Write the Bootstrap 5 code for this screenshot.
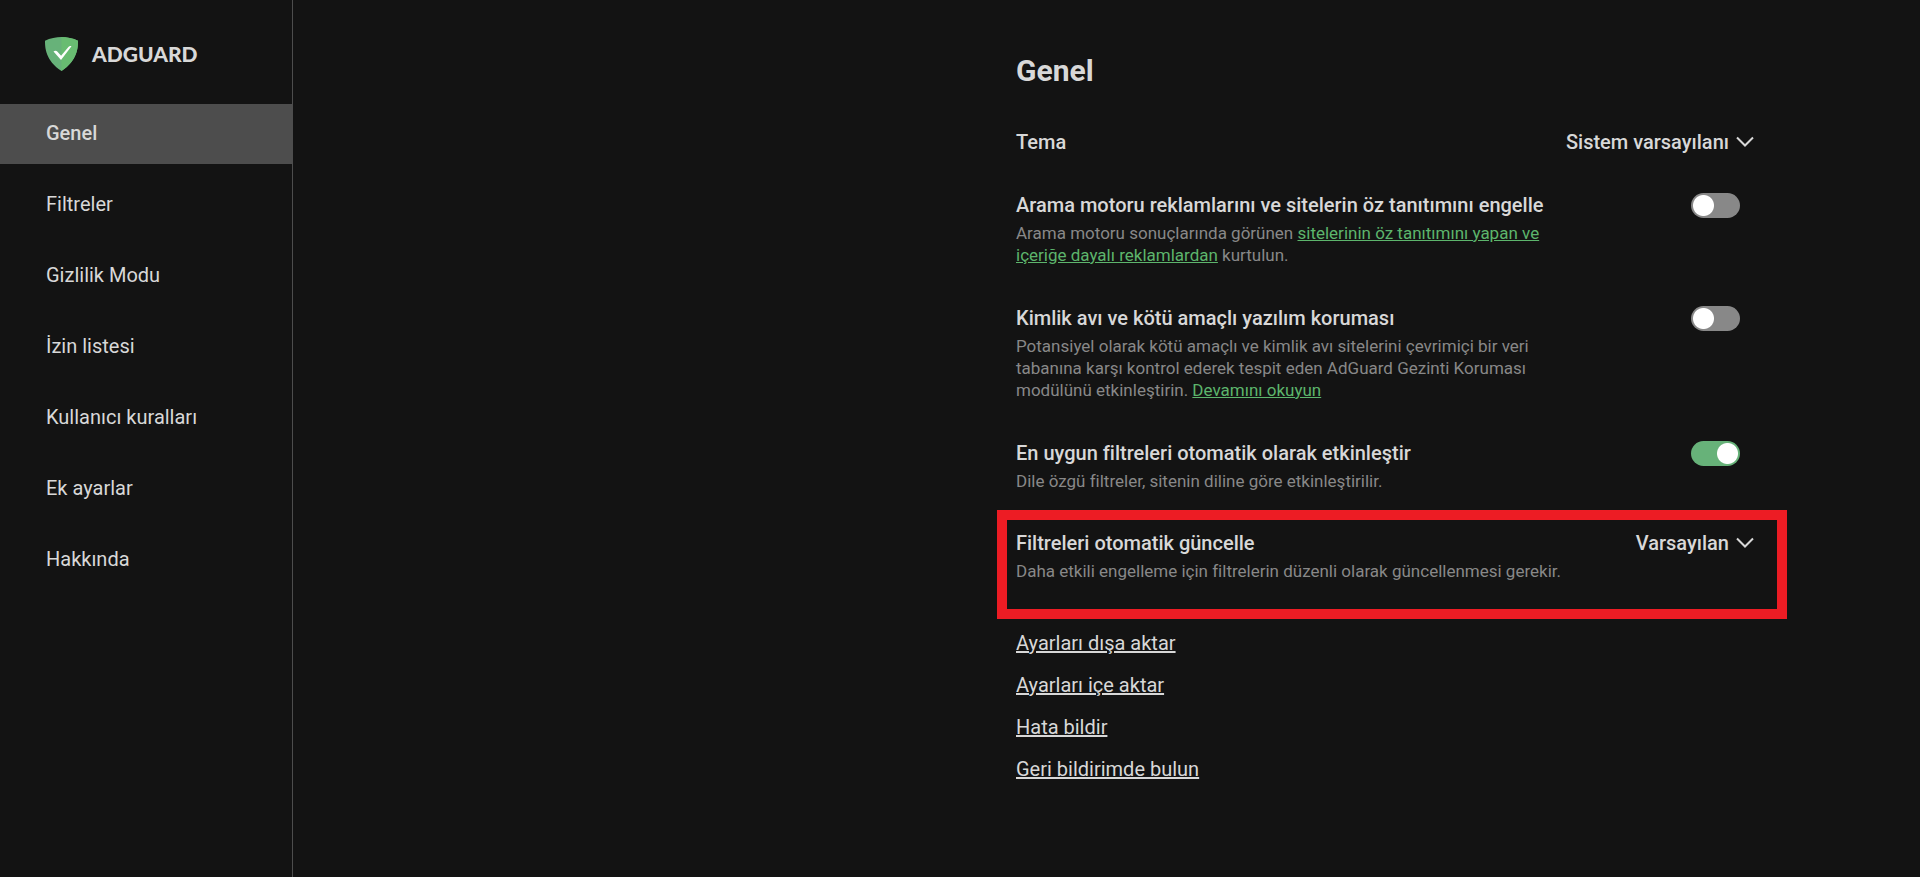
<!DOCTYPE html>
<html lang="tr">
<head>
<meta charset="utf-8">
<meta name="viewport" content="width=device-width, initial-scale=1">
<title>AdGuard – Genel</title>
<link href="https://cdn.jsdelivr.net/npm/bootstrap@5.3.0/dist/css/bootstrap.min.css" rel="stylesheet">
<style>
  body { background: #131313; color: #d8d8d8; font: 400 20px/24px Roboto, "Open Sans", sans-serif; }
  .sidebar { width: 293px; border-right: 1px solid #4d4d4d; }
  .brand { height: 104px; padding: 3px 0 0 45px; gap: 14px; color: #d8d8d8; font: 900 21px/24px Lato, sans-serif; }
  .side-menu { gap: 11px; }
  .side-menu .nav-link { padding: 17px 46px 19px; color: #d8d8d8; }
  .side-menu .nav-link.active { background: #4d4d4d; font-weight: 500; }
  .settings { max-width: 790px; margin: 55px 133px 0 0; }
  .settings h1 { margin: 0; padding-left: 19px; font-size: 30px; line-height: 32px; font-weight: 700; }
  .setting { padding: 0 33px 0 19px; margin-bottom: 40px; }
  .setting-theme { margin: 43px 0 39px; }
  .setting-title { font-weight: 500; }
  .setting-note { max-width: 560px; margin: 5px 0 0; font-size: 17px; line-height: 22px; color: #888; }
  .setting-note a { color: #5db56c; }
  .setting-framed { border: 10px solid #ed1c24; padding: 11px 23px 27px 9px; margin: -22px 0 0; }
  .picker { appearance: none; border: 0; padding: 0 25px 0 0; color: #d8d8d8; font-weight: 500; line-height: 24px; text-align: right;
    background: #131313 url("data:image/svg+xml,%3Csvg xmlns='http://www.w3.org/2000/svg' width='18' height='12' fill='none' stroke='%23d8d8d8' stroke-width='2'%3E%3Cpath d='M1 1.500l8 8 8-8'/%3E%3C/svg%3E") no-repeat right 6px; }
  .picker option { color: #d8d8d8; }
  .toggle.form-check-input { width: 49px; height: 25px; margin: 0 14px 0 0; border: 0; background-color: #888;
    background-image: radial-gradient(circle, #fff 10px, transparent 11px); background-size: 25px 25px; background-position: left; background-repeat: no-repeat; border-radius: 13px; }
  .toggle.form-check-input:checked { background-color: #67b279; background-position: right; background-image: radial-gradient(circle, #fff 10px, transparent 11px); }
  .actions { padding: 12px 19px; gap: 18px; }
  .actions a { color: #d8d8d8; }
</style>
</head>
<body>
<div class="d-flex min-vh-100">
  <aside class="sidebar flex-shrink-0">
    <a class="brand d-flex align-items-center text-decoration-none" href="#">
      <svg width="33" height="34" viewBox="0 0 33 34" aria-hidden="true">
        <path fill="#67b279" d="M16.500 0C11.300 0 5 1.200 0 3.800 0 9.500-.1 23.500 16.500 34 33.100 23.500 33 9.500 33 3.800 28 1.200 21.700 0 16.500 0z"/>
        <path fill="#68bc71" d="M16.500 0v34C33.100 23.500 33 9.500 33 3.800 28 1.200 21.700 0 16.500 0z"/>
        <path fill="#fff" d="M16 23 8.500 14.500c1.600-1.300 3.100-.7 4 .3l3.600 3.900L23.400 10c.9-1.100 1.900-1.200 3.100-.8z"/>
      </svg>
      <span>ADGUARD</span>
    </a>
    <nav class="side-menu nav flex-column">
      <a class="nav-link active" aria-current="page" href="#">Genel</a>
      <a class="nav-link" href="#">Filtreler</a>
      <a class="nav-link" href="#">Gizlilik Modu</a>
      <a class="nav-link" href="#">İzin listesi</a>
      <a class="nav-link" href="#">Kullanıcı kuralları</a>
      <a class="nav-link" href="#">Ek ayarlar</a>
      <a class="nav-link" href="#">Hakkında</a>
    </nav>
  </aside>
  <main class="flex-grow-1 d-flex justify-content-end">
    <div class="settings w-100">
      <h1>Genel</h1>
      <div class="setting setting-theme d-flex justify-content-between">
        <label class="setting-title" for="theme">Tema</label>
        <select class="picker" id="theme"><option>Sistem varsayılanı</option></select>
      </div>
      <div class="setting d-flex justify-content-between">
        <div>
          <label class="setting-title d-block" for="ads">Arama motoru reklamlarını ve sitelerin öz tanıtımını engelle</label>
          <p class="setting-note">Arama motoru sonuçlarında görünen <a href="#">sitelerinin öz tanıtımını yapan ve içeriğe dayalı reklamlardan</a> kurtulun.</p>
        </div>
        <input class="toggle form-check-input flex-shrink-0" type="checkbox" role="switch" id="ads">
      </div>
      <div class="setting d-flex justify-content-between">
        <div>
          <label class="setting-title d-block" for="phishing">Kimlik avı ve kötü amaçlı yazılım koruması</label>
          <p class="setting-note">Potansiyel olarak kötü amaçlı ve kimlik avı sitelerini çevrimiçi bir veri tabanına karşı kontrol ederek tespit eden AdGuard Gezinti Koruması modülünü etkinleştirin. <a href="#">Devamını okuyun</a></p>
        </div>
        <input class="toggle form-check-input flex-shrink-0" type="checkbox" role="switch" id="phishing">
      </div>
      <div class="setting d-flex justify-content-between">
        <div>
          <label class="setting-title d-block" for="auto">En uygun filtreleri otomatik olarak etkinleştir</label>
          <p class="setting-note">Dile özgü filtreler, sitenin diline göre etkinleştirilir.</p>
        </div>
        <input class="toggle form-check-input flex-shrink-0" type="checkbox" role="switch" id="auto" checked>
      </div>
      <div class="setting setting-framed d-flex justify-content-between align-items-start">
        <div>
          <label class="setting-title d-block" for="update">Filtreleri otomatik güncelle</label>
          <p class="setting-note">Daha etkili engelleme için filtrelerin düzenli olarak güncellenmesi gerekir.</p>
        </div>
        <select class="picker" id="update"><option>Varsayılan</option></select>
      </div>
      <div class="actions d-flex flex-column align-items-start">
        <a href="#">Ayarları dışa aktar</a>
        <a href="#">Ayarları içe aktar</a>
        <a href="#">Hata bildir</a>
        <a href="#">Geri bildirimde bulun</a>
      </div>
    </div>
  </main>
</div>
<script src="https://cdn.jsdelivr.net/npm/bootstrap@5.3.0/dist/js/bootstrap.bundle.min.js"></script>
</body>
</html>
